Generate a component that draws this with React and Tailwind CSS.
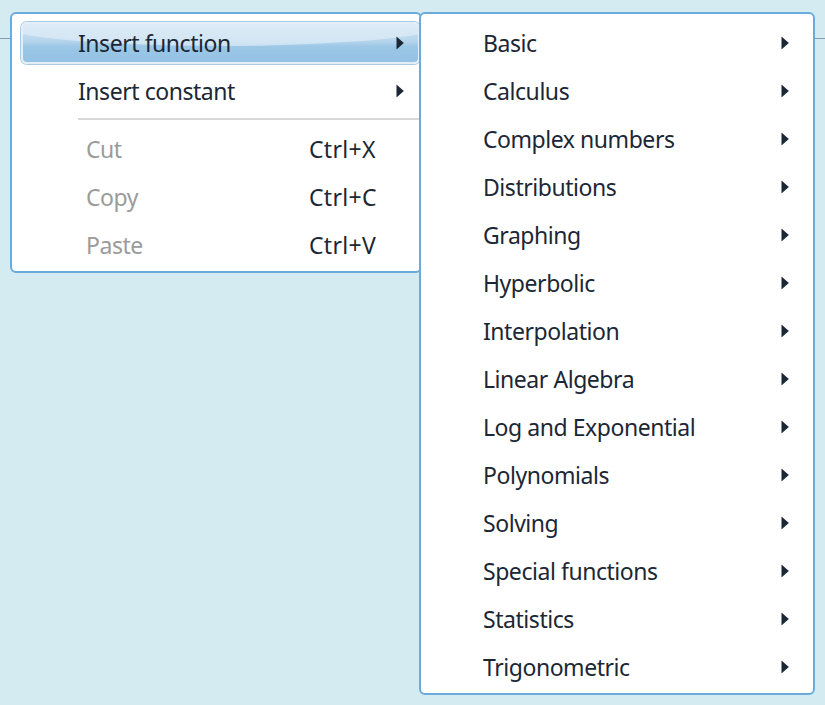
import React from "react";

const Arrow = ({ className = "" }) => (
  <svg width="8" height="14" viewBox="0 0 8 14" className={className}>
    <path d="M0.5 0.5 L7.8 7 L0.5 13.5 Z" fill="#1b2735" />
  </svg>
);

const subItems = [
  "Basic",
  "Calculus",
  "Complex numbers",
  "Distributions",
  "Graphing",
  "Hyperbolic",
  "Interpolation",
  "Linear Algebra",
  "Log and Exponential",
  "Polynomials",
  "Solving",
  "Special functions",
  "Statistics",
  "Trigonometric",
];

export default function App() {
  return (
    <div
      className="relative w-[825px] h-[705px] overflow-hidden bg-[#d5ebf2] text-[#1b2735]"
      style={{ fontFamily: '"Noto Sans", "Open Sans", sans-serif' }}
    >
      {/* background content */}
      <div className="h-[39px] border-b border-[#7f9fb3]"></div>

      {/* main context menu */}
      <div className="absolute left-[10px] top-[12px] w-[412px] h-[261px] bg-white border-2 border-[#6aabdc] rounded-[6px] text-[23px] tracking-[-0.45px]">
        <div className="pt-[8px] pl-[9px]">
          <div className="relative h-[42px] overflow-hidden rounded-[6px] border-2 border-[#e4eef6] shadow-[0_0_0_1px_#a9cbe3] bg-[linear-gradient(to_bottom,#cfe4f4_0%,#b6d5ec_45%,#9cc7e6_60%,#93c2e4_100%)] flex items-center pl-[55px] pr-[14px]">
            <div className="absolute left-[-40px] right-[-40px] top-[-30px] h-[52px] rounded-[50%] bg-[linear-gradient(to_bottom,rgba(255,255,255,0.05),rgba(255,255,255,0.45))]"></div>
            <span className="relative flex-1 leading-none">Insert function</span>
            <Arrow className="relative" />
          </div>
          <div className="mt-[3px] h-[48px] flex items-center pl-[57px] pr-[16px]">
            <span className="flex-1 leading-none">Insert constant</span>
            <Arrow />
          </div>
          <div className="ml-[57px] h-[2px] bg-[#d8d8d8] mt-[3px] mb-[5px]"></div>
          {[
            ["Cut", "Ctrl+X"],
            ["Copy", "Ctrl+C"],
            ["Paste", "Ctrl+V"],
          ].map(([a, b]) => (
            <div key={a} className="h-[48px] flex items-center pl-[65px]">
              <span className="w-[223px] text-[#9b9b9b] leading-none">{a}</span>
              <span className="leading-none tracking-[0.3px]">{b}</span>
            </div>
          ))}
        </div>
      </div>

      {/* submenu */}
      <div className="absolute left-[419px] top-[12px] w-[396px] h-[683px] bg-white border-2 border-[#6aabdc] rounded-[6px] text-[23px] tracking-[-0.45px] pt-[5px]">
        {subItems.map((t) => (
          <div key={t} className="h-[48px] flex items-center pl-[62px] pr-[24px]">
            <span className="flex-1 leading-none">{t}</span>
            <Arrow />
          </div>
        ))}
      </div>
    </div>
  );
}
